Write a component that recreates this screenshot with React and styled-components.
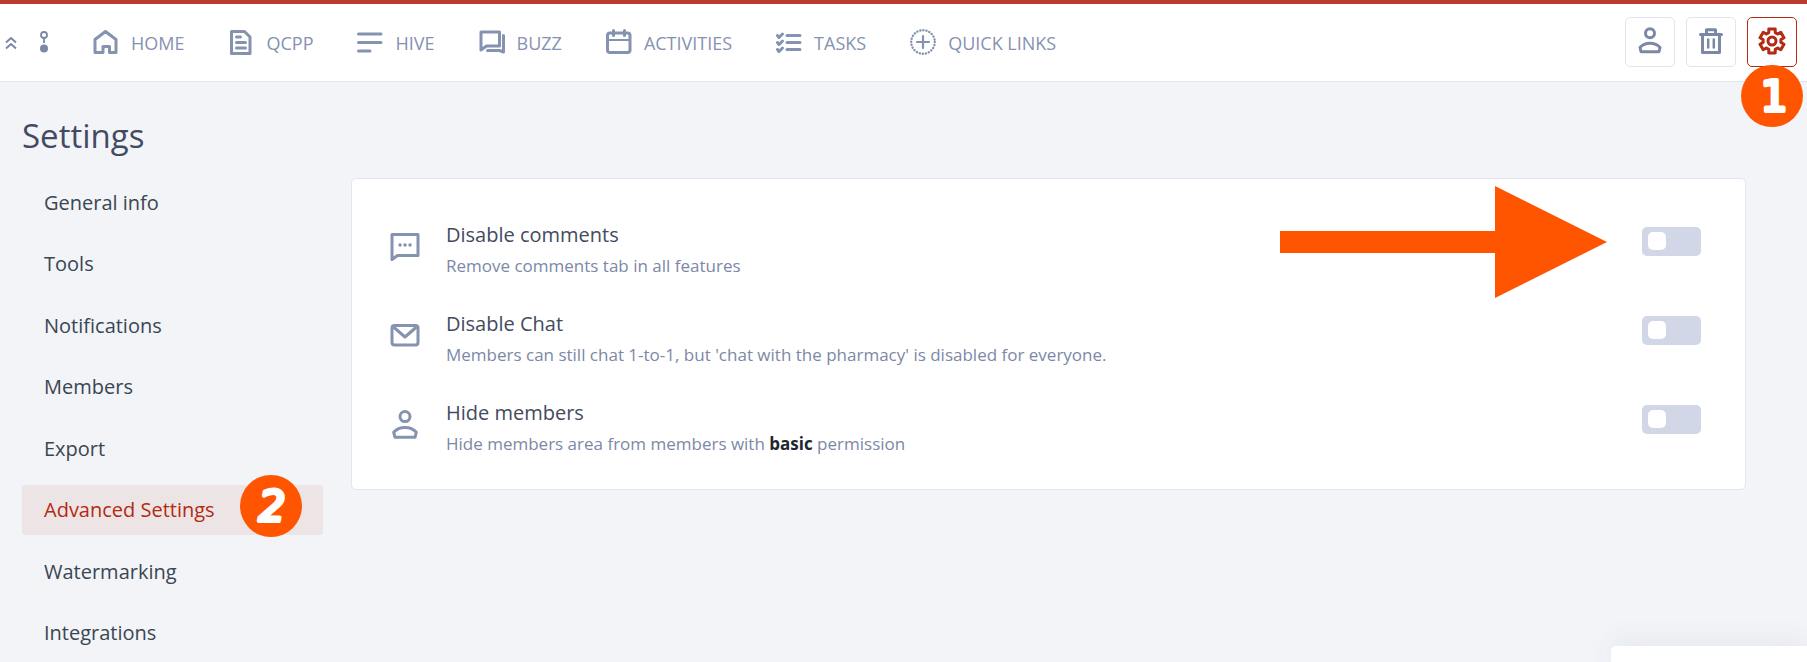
import React from 'react'
import styled, { createGlobalStyle } from 'styled-components'

const GlobalStyle = createGlobalStyle`
    *, *::before, *::after{
        box-sizing: border-box;
    }

    body{
        margin: 0;
        background-color: #f2f4f8;
        font-family: "Open Sans", "Noto Sans", sans-serif;
        overflow: hidden;
    }
`;

// six teeth, the first one pointing up
const gearPath = () => {
    const point = (radius, degrees) => {
        const angle = (degrees - 90) * Math.PI / 180;
        return `${(15 + radius * Math.cos(angle)).toFixed(2)} ${(15 + radius * Math.sin(angle)).toFixed(2)}`;
    }

    const teeth = [0, 60, 120, 180, 240, 300].map((a) => (
        `${point(9, a - 21)} L${point(12.4, a - 15)} L${point(12.4, a + 15)} L${point(9, a + 21)}`
    ));

    return `M${teeth.join(' L')} Z`;
}

const icons = {
    collapse: (
        <path d="M10 15.5L15 11L20 15.5M10 21.5L15 17L20 21.5" strokeWidth="2"/>
    ),
    node: (
        <>
            <circle cx="15" cy="8" r="3" strokeWidth="1.8"/>
            <path d="M15 11V16" strokeWidth="1.8"/>
            <circle cx="15" cy="21.5" r="4" fill="currentColor" stroke="none"/>
        </>
    ),
    home: (
        <path d="M4 25.5V12.5L14.500 4.500L25 12.5V25.5H18.500V19.5H12V25.5Z"/>
    ),
    document: (
        <>
            <path d="M5.5 4.5H18.5L24 10V26.5H5.5Z"/>
            <path d="M10.5 10H14.5M10.5 15.5H19.5M10.5 21H19.5" strokeLinecap="round"/>
        </>
    ),
    lines: (
        <path d="M3.5 7H26M3.5 15.5H26M3.5 24H15" strokeLinecap="round"/>
    ),
    chat: (
        <>
            <path d="M4 5H22.5V19H9.5L4 23Z"/>
            <path d="M26.5 8.5V25L22.5 23.5H10.5" strokeLinecap="round"/>
        </>
    ),
    calendar: (
        <>
            <rect x="3.5" y="6" width="22.5" height="19.5" rx="2.5"/>
            <path d="M4 13H26" strokeWidth="2"/>
            <path d="M9.5 3.5V8.5M20.5 3.5V8.5" strokeLinecap="round"/>
        </>
    ),
    tasks: (
        <path d="M13 8.5H26M13 15.5H26M13 22.5H26M3.5 8.5L5 10.5L8.5 7M3.5 15.5L5 17.5L8.5 14M3.5 22.5L5 24.5L8.5 21" strokeLinecap="round"/>
    ),
    plus: (
        <>
            <circle cx="15" cy="15" r="11.8" strokeWidth="2.4" strokeDasharray="0.1 2.989" strokeLinecap="round"/>
            <path d="M9 15H21M15 9V21" strokeWidth="2.2" strokeLinecap="round"/>
        </>
    ),
    profile: (
        <>
            <circle cx="15" cy="7.2" r="4.5"/>
            <path d="M5 21.5C7.5 18.6 11 17.3 15 17.3C19 17.3 22.5 18.6 25 21.5L24 25.7H6Z"/>
        </>
    ),
    member: (
        <>
            <circle cx="15" cy="7.6" r="5"/>
            <path d="M3.7 23.3C6.5 20 11 18.4 15 18.4C19 18.4 23.5 20 26.3 23.3L25 28.3H5Z"/>
        </>
    ),
    trash: (
        <>
            <path d="M4.5 8.5H25.5M10.5 8.5V3.8H19.5V8.5M6.5 8.5V26.5H23.5V8.5" strokeLinecap="round"/>
            <path d="M12.2 13.5V21.5M17.8 13.5V21.5" strokeLinecap="round" strokeWidth="2.5"/>
        </>
    ),
    gear: (
        <>
            <path d={gearPath()}/>
            <circle cx="15" cy="15" r="4"/>
        </>
    ),
    comment: (
        <>
            <path d="M2 3.5H28V24.5H7.5L2 28.5Z"/>
            <path d="M10 14H10.1M15 14H15.1M20 14H20.1" strokeLinecap="round" strokeWidth="3.4"/>
        </>
    ),
    mail: (
        <>
            <rect x="2" y="5.5" width="26" height="19.5" rx="2.5"/>
            <path d="M3.5 7L15 17L26.5 7"/>
        </>
    ),
}

function Icon({ name }) {
    return (
        <IconSvg viewBox="0 0 30 30" aria-hidden="true">
            {icons[name]}
        </IconSvg>
    )
}

const navItems = [
    { icon: 'home', label: 'HOME' },
    { icon: 'document', label: 'QCPP' },
    { icon: 'lines', label: 'HIVE' },
    { icon: 'chat', label: 'BUZZ' },
    { icon: 'calendar', label: 'ACTIVITIES' },
    { icon: 'tasks', label: 'TASKS' },
    { icon: 'plus', label: 'QUICK LINKS' },
]

const sections = [
    'General info',
    'Tools',
    'Notifications',
    'Members',
    'Export',
    'Advanced Settings',
    'Watermarking',
    'Integrations',
]

const options = [
    {
        id: 'comments',
        icon: 'comment',
        title: 'Disable comments',
        text: 'Remove comments tab in all features',
    },
    {
        id: 'chat',
        icon: 'mail',
        title: 'Disable Chat',
        text: "Members can still chat 1-to-1, but 'chat with the pharmacy' is disabled for everyone.",
    },
    {
        id: 'members',
        icon: 'member',
        title: 'Hide members',
        text: <>Hide members area from members with <strong>basic</strong> permission</>,
    },
]

function Header() {
    return (
        <HeaderBar>
            <HeaderTools>
                <ToolButton type="button" aria-label="Collapse"><Icon name="collapse"/></ToolButton>
                <ToolButton type="button" aria-label="Switch group"><Icon name="node"/></ToolButton>
            </HeaderTools>
            <MainNav>
                {navItems.map((item) => (
                    <NavLink href="#" key={item.label}>
                        <Icon name={item.icon}/>
                        <NavLabel>{item.label}</NavLabel>
                    </NavLink>
                ))}
            </MainNav>
            <Actions>
                <ActionButton type="button" aria-label="Profile"><Icon name="profile"/></ActionButton>
                <ActionButton type="button" aria-label="Trash"><Icon name="trash"/></ActionButton>
                <ActionSlot>
                    <ActionButton type="button" aria-label="Settings" $active><Icon name="gear"/></ActionButton>
                    <ActionMarker viewBox="0 0 62 62">
                        <circle cx="31" cy="31" r="31" fill="#ff5500"/>
                        <MarkerDigit x="33" y="46">1</MarkerDigit>
                    </ActionMarker>
                </ActionSlot>
            </Actions>
        </HeaderBar>
    )
}

function Option({ option }) {
    return (
        <OptionRow>
            <OptionIcon><Icon name={option.icon}/></OptionIcon>
            <OptionBody>
                <OptionTitle htmlFor={option.id}>{option.title}</OptionTitle>
                <OptionText>{option.text}</OptionText>
            </OptionBody>
            <Toggle type="checkbox" role="switch" id={option.id}/>
        </OptionRow>
    )
}

function App() {
    return (
        <>
            <GlobalStyle/>
            <Header/>
            <Page>
                <Sidebar>
                    <Title>Settings</Title>
                    <SectionList>
                        {sections.map((name) => (
                            <SectionItem key={name}>
                                <SectionLink href="#" $active={name === 'Advanced Settings'}>{name}</SectionLink>
                                {name === 'Advanced Settings' && (
                                    <SectionMarker viewBox="0 0 62 62">
                                        <circle cx="31" cy="31" r="31" fill="#ff5500"/>
                                        <MarkerDigit x="32" y="46" $slanted>2</MarkerDigit>
                                    </SectionMarker>
                                )}
                            </SectionItem>
                        ))}
                    </SectionList>
                </Sidebar>
                <Card>
                    {options.map((option) => (
                        <Option key={option.id} option={option}/>
                    ))}
                    <Arrow viewBox="0 0 327 112" aria-hidden="true">
                        <path d="M0 45H215V0L327 56L215 112V67H0Z" fill="#ff5500"/>
                    </Arrow>
                </Card>
            </Page>
            <ChatPanel/>
        </>
    )
}

const IconSvg = styled.svg`
    display: block;
    flex: none;
    width: 30px;
    height: 30px;
    fill: none;
    stroke: currentColor;
    stroke-width: 3;
    stroke-linejoin: round;
`;

const HeaderBar = styled.header`
    display: flex;
    align-items: center;
    height: 82px;
    padding: 0 10px 2px 0;
    border-top: 4px solid #bb3b31;
    border-bottom: 1px solid #e2e5ee;
    background-color: #fff;
    color: #8592b0;
`;

const HeaderTools = styled.div`
    display: flex;
    gap: 3px;
    width: 91px;
    margin-left: -4px;
`;

const ToolButton = styled.button`
    padding: 0;
    border: none;
    background: none;
    color: #7c88a6;
    cursor: pointer;
`;

const MainNav = styled.nav`
    display: flex;
    flex: 1;
    gap: 42px;
    padding-left: 4px;
`;

const NavLink = styled.a`
    display: flex;
    align-items: center;
    gap: 10px;
    color: #8592b0;
    text-decoration: none;
`;

const NavLabel = styled.span`
    padding-top: 2px;
    font-size: 18px;
    line-height: 24px;
    white-space: nowrap;
`;

const Actions = styled.div`
    display: flex;
    gap: 11px;
`;

const ActionSlot = styled.div`
    position: relative;
`;

const ActionButton = styled.button`
    display: flex;
    justify-content: center;
    width: 50px;
    height: 50px;
    padding: 8px 0 0;
    border: 1px solid ${(props) => props.$active ? '#b22b12' : '#e2e5ef'};
    border-radius: 5px;
    background-color: #fff;
    color: ${(props) => props.$active ? '#b22b12' : '#7b89a8'};
    cursor: pointer;
`;

const Marker = styled.svg`
    position: absolute;
    width: 62px;
    height: 62px;
`;

const ActionMarker = styled(Marker)`
    top: 48px;
    right: -6px;
`;

const SectionMarker = styled(Marker)`
    top: -10px;
    right: 21px;
`;

const MarkerDigit = styled.text`
    fill: #fff;
    stroke: #fff;
    stroke-width: 4px;
    stroke-linejoin: round;
    font-family: "DejaVu Sans", sans-serif;
    font-size: 42px;
    font-style: ${(props) => props.$slanted ? 'oblique' : 'normal'};
    text-anchor: middle;
`;

const Page = styled.main`
    display: flex;
    align-items: flex-start;
    gap: 28px;
    padding: 30px 61px 0 22px;
`;

const Sidebar = styled.aside`
    flex: none;
    width: 301px;
`;

const Title = styled.h1`
    margin: 0 0 18px;
    color: #434b62;
    font-size: 33px;
    font-weight: 400;
    line-height: 48px;
`;

const SectionList = styled.ul`
    display: flex;
    flex-direction: column;
    justify-content: space-between;
    min-height: 480px;
    margin: 0;
    padding: 0;
    list-style: none;
`;

const SectionItem = styled.li`
    position: relative;
`;

const SectionLink = styled.a`
    display: block;
    padding: 0 22px;
    border-radius: 3px;
    background-color: ${(props) => props.$active ? '#ede4e6' : 'transparent'};
    color: ${(props) => props.$active ? '#b22b12' : '#3a4651'};
    font-size: 20px;
    line-height: 50px;
    text-decoration: none;
`;

const Card = styled.section`
    position: relative;
    display: flex;
    flex: 1;
    flex-direction: column;
    gap: 27px;
    min-width: 0;
    margin-top: 66px;
    padding: 41px 44px 29px 38px;
    border: 1px solid #e2e6f0;
    border-radius: 5px;
    background-color: #fff;
`;

const OptionRow = styled.div`
    display: flex;
    align-items: flex-start;
`;

const OptionIcon = styled.div`
    margin: 11px 26px 0 0;
    color: #8592b0;
`;

const OptionBody = styled.div`
    flex: 1;
    min-width: 0;
`;

const OptionTitle = styled.label`
    display: block;
    color: #434b5e;
    font-size: 20px;
    line-height: 30px;
`;

const OptionText = styled.p`
    margin: 0;
    color: #7c88a6;
    font-size: 17px;
    line-height: 32px;

    strong{
        color: #22262f;
        font-weight: 700;
    }
`;

const Toggle = styled.input`
    appearance: none;
    width: 59px;
    height: 29px;
    margin: 7px 0 0;
    padding: 5px 6px;
    border-radius: 5px;
    background-color: #d1d7e7;
    cursor: pointer;

    &::before{
        content: '';
        display: block;
        width: 18px;
        height: 18px;
        border-radius: 5px;
        background-color: #fff;
    }

    &:checked{
        padding-left: 35px;
        background-color: #b22b12;
    }
`;

const Arrow = styled.svg`
    position: absolute;
    top: 7px;
    right: 138px;
    width: 327px;
    height: 112px;
    pointer-events: none;
`;

const ChatPanel = styled.aside`
    position: fixed;
    right: 0;
    bottom: 0;
    width: 196px;
    height: 16px;
    border-top-left-radius: 5px;
    background-color: #fff;
    box-shadow: 0 0 30px rgba(60, 70, 100, 0.12);
`;

export default App
